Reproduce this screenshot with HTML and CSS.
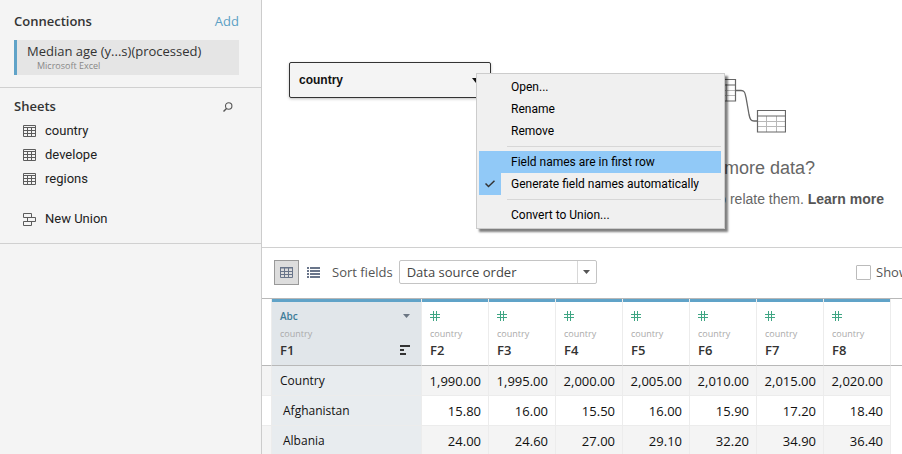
FILE: index.html
```
<!DOCTYPE html>
<html lang="en">
<head>
<meta charset="utf-8">
<title>Data Source</title>
<link rel="stylesheet" href="styles.css">
</head>
<body>
<svg class="defs" aria-hidden="true">
  <symbol id="sheet" viewBox="0 0 13 12">
    <path d="M.5 .5h12v11h-12zM.5 2.5h12M.5 5.5h12M.5 8.5h12M4.5 2.5v9M8.5 2.5v9" fill="none" stroke="currentColor"/>
  </symbol>
  <symbol id="number" viewBox="0 0 10 10">
    <path d="M3.5 0v10M6.5 0v10M0 3.5h10M0 6.5h10" fill="none" stroke="currentColor"/>
  </symbol>
</svg>
<div class="app">
  <aside class="sidebar">
    <section class="panel connections">
      <header class="panel-head">
        <h2>Connections</h2>
        <a href="#" class="add">Add</a>
      </header>
      <div class="connection">
        <div class="connection-name">Median age (y...s)(processed)</div>
        <div class="connection-type">Microsoft Excel</div>
      </div>
    </section>
    <section class="panel sheets">
      <header class="panel-head">
        <h2>Sheets</h2>
        <button class="search" aria-label="Search sheets">
          <svg width="10" height="10" viewBox="0 0 10 10"><path d="M3.5 6.5L.5 9.5" stroke="currentColor" stroke-width="1.4"/><circle cx="5.7" cy="4" r="3.2" fill="none" stroke="currentColor" stroke-width="1.1"/></svg>
        </button>
      </header>
      <ul class="sheet-list">
        <li><svg width="13" height="12"><use href="#sheet"/></svg>country</li>
        <li><svg width="13" height="12"><use href="#sheet"/></svg>develope</li>
        <li><svg width="13" height="12"><use href="#sheet"/></svg>regions</li>
        <li class="union"><svg width="13" height="13" viewBox="0 0 13 13"><path d="M.5 .5h8v4h-8zM4.5 4.5h8v4h-8zM.5 8.5h8v4h-8z" fill="none" stroke="currentColor"/></svg>New Union</li>
      </ul>
    </section>
  </aside>
  <main class="content">
    <section class="canvas">
      <div class="table-node">
        <span>country</span>
        <svg width="8" height="5" viewBox="0 0 8 5"><path d="M0 0h8L4 5z" fill="currentColor"/></svg>
      </div>
      <div class="hint">
        <svg width="82" height="54" viewBox="-4 0 82 54" fill="none">
          <path d="M9.5 5v17M18.5 5v17M1 11.5h26M1 16.5h26" stroke="#b8b8b8"/>
          <path d="M.5 .5h27v21.500h-27zM.5 6h27" stroke="#666" stroke-width="1.2"/>
          <path d="M28 11.500h5c4 0 4 3 5 7l3 17c1 5 2 6.500 5 6.500h4" stroke="#666" stroke-width="1.3"/>
          <path d="M58.500 37v16M68.500 37v16M50 42.500h27M50 47.500h27" stroke="#b8b8b8"/>
          <path d="M49.500 31.500h28v21.500h-28zM49.500 37h28" stroke="#666" stroke-width="1.2"/>
        </svg>
        <p class="hint-title">Need more data?</p>
        <p class="hint-text">Drag tables here to relate them. <a href="#">Learn more</a></p>
      </div>
      <div class="menu" role="menu">
        <button role="menuitem">Open...</button>
        <button role="menuitem">Rename</button>
        <button role="menuitem">Remove</button>
        <hr>
        <button role="menuitem" class="active">Field names are in first row</button>
        <button role="menuitemcheckbox" aria-checked="true"><span class="check"><svg width="10" height="8" viewBox="0 0 10 8"><path d="M.5 3.500L3.500 6.500L9.500 .8" fill="none" stroke="#333" stroke-width="1.5"/></svg></span>Generate field names automatically</button>
        <hr>
        <button role="menuitem">Convert to Union...</button>
      </div>
    </section>
    <section class="toolbar">
      <button class="view selected" aria-label="Grid view">
        <svg width="13" height="11" viewBox="0 0 13 11"><path d="M.5 1h12v9.500h-12zM.5 4.500h12M.5 7.500h12M4.500 1v9M8.500 1v9M0 .5h13" fill="none" stroke="currentColor"/></svg>
      </button>
      <button class="view" aria-label="List view">
        <svg width="13" height="11" viewBox="0 0 13 11"><path d="M0 1h2M3 1h10M0 4h2M3 4h10M0 7h2M3 7h10M0 10h2M3 10h10" stroke="currentColor" stroke-width="2"/></svg>
      </button>
      <label for="sort">Sort fields</label>
      <div class="select">
        <select id="sort"><option>Data source order</option></select>
        <svg width="7" height="4" viewBox="0 0 7 4"><path d="M0 0h7L3.500 4z" fill="#555"/></svg>
      </div>
      <label class="aliases"><input type="checkbox">Show aliases</label>
    </section>
    <section class="grid">
      <table>
        <thead>
          <tr>
            <th class="gutter"></th>
            <th class="key"><div class="type"><span>Abc</span><svg width="7" height="4" viewBox="0 0 7 4"><path d="M0 0h7L3.500 4z" fill="#6b7683"/></svg></div><div class="source">country</div><div class="field"><span>F1</span><svg width="10" height="10" viewBox="0 0 10 10"><path d="M0 1h10M0 5h4M0 9h6" stroke="#333" stroke-width="2"/></svg></div></th>
            <th><div class="type"><svg width="10" height="10"><use href="#number"/></svg></div><div class="source">country</div><div class="field">F2</div></th>
            <th><div class="type"><svg width="10" height="10"><use href="#number"/></svg></div><div class="source">country</div><div class="field">F3</div></th>
            <th><div class="type"><svg width="10" height="10"><use href="#number"/></svg></div><div class="source">country</div><div class="field">F4</div></th>
            <th><div class="type"><svg width="10" height="10"><use href="#number"/></svg></div><div class="source">country</div><div class="field">F5</div></th>
            <th><div class="type"><svg width="10" height="10"><use href="#number"/></svg></div><div class="source">country</div><div class="field">F6</div></th>
            <th><div class="type"><svg width="10" height="10"><use href="#number"/></svg></div><div class="source">country</div><div class="field">F7</div></th>
            <th><div class="type"><svg width="10" height="10"><use href="#number"/></svg></div><div class="source">country</div><div class="field">F8</div></th>
            <th class="rest"></th>
          </tr>
        </thead>
        <tbody>
          <tr><td class="gutter"></td><td class="key">Country</td><td>1,990.00</td><td>1,995.00</td><td>2,000.00</td><td>2,005.00</td><td>2,010.00</td><td>2,015.00</td><td>2,020.00</td><td class="rest"></td></tr>
          <tr><td class="gutter"></td><td class="key indent">Afghanistan</td><td>15.80</td><td>16.00</td><td>15.50</td><td>16.00</td><td>15.90</td><td>17.20</td><td>18.40</td><td class="rest"></td></tr>
          <tr><td class="gutter"></td><td class="key indent">Albania</td><td>24.00</td><td>24.60</td><td>27.00</td><td>29.10</td><td>32.20</td><td>34.90</td><td>36.40</td><td class="rest"></td></tr>
        </tbody>
      </table>
    </section>
  </main>
</div>
</body>
</html>
```
FILE: styles.css
```
* { box-sizing: border-box; }
body {
  margin: 0;
  font: 13px/18px "Open Sans", sans-serif;
  color: #333;
  background: #fff;
  overflow: hidden;
}
h2, p, ul { margin: 0; padding: 0; }
button { font: inherit; color: inherit; border: 0; padding: 0; background: none; }
a { text-decoration: none; }
svg { display: block; flex: none; }
.defs { position: absolute; width: 0; height: 0; }
.app { display: flex; min-height: 100vh; }

.sidebar {
  flex: 0 0 262px;
  background: #f4f4f4;
  border-right: 1px solid #ccc;
}
.panel { border-bottom: 1px solid #d0d0d0; }
.panel-head { display: flex; align-items: center; justify-content: space-between; }
.panel h2 { font-size: 13px; line-height: 18px; font-weight: 600; }
.connections { padding: 12px 22px 12px 14px; }
.connections .panel-head { margin-bottom: 10px; }
.add { color: #5ba0c4; }
.connection {
  border-left: 3px solid #60a3c8;
  background: #e5e5e5;
  padding: 2px 10px;
  height: 35px;
}
.connection-name { line-height: 18px; white-space: nowrap; }
.connection-type { font-size: 9px; line-height: 12px; padding-left: 10px; color: #888; }
.sheets { padding: 9px 28px 12px 14px; }
.search { color: #555; padding-top: 2px; }
.sheet-list { list-style: none; padding: 4px 0 0 9px; }
.sheet-list li {
  display: flex;
  align-items: center;
  gap: 9px;
  height: 24px;
  color: #222;
  font-family: Roboto, sans-serif;
}
.sheet-list svg { color: #5c5c5c; }
.sheet-list .union { margin-top: 16px; }

.content { flex: 1; min-width: 0; display: flex; flex-direction: column; overflow: hidden; }
.canvas {
  position: relative;
  height: 248px;
  border-bottom: 1px solid #d0d0d0;
  padding: 62px 18px 0 27px;
  display: flex;
  align-items: flex-start;
  justify-content: space-between;
  font-family: "Liberation Sans", sans-serif;
}
.table-node {
  width: 202px;
  height: 36px;
  padding: 0 10px 0 9px;
  display: flex;
  align-items: center;
  justify-content: space-between;
  background: #f4f4f4;
  border: 1px solid #333;
  border-radius: 2px;
  box-shadow: 0 1px 3px rgba(0, 0, 0, .25);
  font-size: 12px;
  font-weight: 700;
  color: #111;
}
.hint {
  display: flex;
  flex-direction: column;
  align-items: center;
  padding-top: 17px;
  color: #666;
  white-space: nowrap;
}
.hint-title { font-size: 18px; line-height: 22px; margin-top: 24px; }
.hint-text { font-size: 14px; line-height: 18px; margin-top: 11px; }
.hint-text a { color: #555; font-weight: 700; }

.menu {
  position: absolute;
  left: 214px;
  top: 73px;
  width: 249px;
  padding: 2px 3px 2px 2px;
  background: #f0f0f0;
  border: 1px solid #ccc;
  box-shadow: 3px 3px 2px rgba(0, 0, 0, .5);
  font-family: Roboto, sans-serif;
  font-size: 12px;
  color: #000;
}
.menu button {
  display: block;
  position: relative;
  width: 100%;
  height: 22px;
  padding-left: 32px;
  text-align: left;
  white-space: nowrap;
}
.menu .active { background: #91c9f7; }
.menu .check {
  position: absolute;
  left: 0;
  top: 0;
  width: 22px;
  height: 22px;
  display: flex;
  align-items: center;
  justify-content: center;
  background: #91c9f7;
}
.menu hr { margin: 4px 0 4px 28px; border: 0; border-top: 1px solid #d7d7d7; }

.toolbar {
  height: 50px;
  padding: 0 0 2px 12px;
  display: flex;
  align-items: center;
  color: #555;
  white-space: nowrap;
}
.view {
  width: 25px;
  height: 25px;
  display: flex;
  align-items: center;
  justify-content: center;
  color: #69758a;
}
.view + .view { margin: 0 6px 0 2px; }
.view.selected { background: #ddd; border: 1px solid #999; }
.select {
  margin-left: 6px;
  width: 198px;
  height: 24px;
  display: grid;
  grid-template-columns: 1fr 18px;
  align-items: center;
  justify-items: center;
  border: 1px solid #c4c4c4;
  border-radius: 2px;
}
.select select {
  grid-area: 1 / 1 / 2 / 3;
  width: 100%;
  height: 22px;
  padding: 0 7px;
  appearance: none;
  border: 0;
  background: linear-gradient(#d8d8d8, #d8d8d8) right 18px top / 1px 100% no-repeat;
  font: inherit;
  color: #444;
}
.select svg { grid-area: 1 / 2; pointer-events: none; }
.aliases {
  flex: 0 0 46px;
  min-width: 0;
  overflow: hidden;
  margin-left: auto;
  display: flex;
  align-items: center;
  gap: 5px;
}
.aliases input {
  appearance: none;
  flex: none;
  width: 15px;
  height: 15px;
  margin: 0;
  border: 1px solid #bbb;
  border-radius: 1px;
}

.grid { border-top: 1px solid #b8b8b8; }
table { width: 100%; border-collapse: separate; border-spacing: 0; table-layout: fixed; }
th, td { padding: 0; font-weight: 400; border-right: 1px solid #ececec; }
th { width: 67px; height: 67px; padding: 7px 8px 0; border-bottom: 1px solid #b8b8b8; text-align: left; vertical-align: top; background: linear-gradient(#60a3c8, #60a3c8) top / 100% 3px no-repeat content-box; background-origin: border-box; background-clip: padding-box; }
th.key { width: 150px; background-color: #e1e6ea; padding-right: 11px; }
th.gutter { width: 10px; padding: 0; background: none; }
th.rest { width: auto; background: none; border-right: 0; }
.type, .field { display: flex; align-items: center; justify-content: space-between; }
.type { height: 20px; font-size: 10px; font-weight: 600; color: #3f7d99; }
th:not(.key) .type { color: #3fa583; }
.source { font-size: 9px; line-height: 16px; color: #aaa; }
.field { font-size: 13px; line-height: 16px; font-weight: 600; color: #333; }
td { height: 30px; padding-right: 7px; border-bottom: 1px solid #ececec; text-align: right; color: #111; }
tbody tr:nth-child(odd) td { background: #f4f4f4; }
tbody tr td.key { padding-left: 8px; text-align: left; font-size: 12px; background: #e8ecef; }
tbody tr td.indent { padding-left: 11px; }
tbody tr td.rest { background: #fff; border: 0; }
```
